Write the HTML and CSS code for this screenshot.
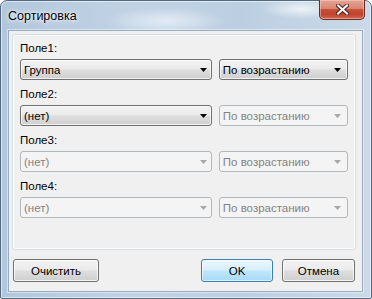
FILE: index.html
```html
<!DOCTYPE html>
<html lang="ru">
<head>
    <meta charset="UTF-8">
    <title>Сортировка</title>
    <link rel="stylesheet" href="styles.css">
</head>
<body>
    <div class="window">
        <!--заголовок окна-->
        <div class="titlebar">
            <span class="title">Сортировка</span>
            <button class="close-btn">
                <svg width="13" height="11" viewBox="0 0 13 11">
                    <path d="M2 1.5L11 9.5M11 1.5L2 9.5" stroke="#4a2320" stroke-width="4" stroke-linecap="square"/>
                    <path d="M2 1.5L11 9.5M11 1.5L2 9.5" stroke="#fff" stroke-width="2" stroke-linecap="square"/>
                </svg>
            </button>
        </div>
        <div class="client">
            <div class="groupbox">
                <div class="sort-row">
                    <div class="field-label">Поле1:</div>
                    <div class="combos">
                        <div class="combo combo-field"><span>Группа</span><svg class="arrow" width="7" height="4"><path d="M0 0H7L3.5 4Z"/></svg></div>
                        <div class="combo combo-order"><span>По возрастанию</span><svg class="arrow" width="7" height="4"><path d="M0 0H7L3.5 4Z"/></svg></div>
                    </div>
                </div>
                <div class="sort-row">
                    <div class="field-label">Поле2:</div>
                    <div class="combos">
                        <div class="combo combo-field"><span>(нет)</span><svg class="arrow" width="7" height="4"><path d="M0 0H7L3.5 4Z"/></svg></div>
                        <div class="combo combo-order disabled"><span>По возрастанию</span><svg class="arrow" width="7" height="4"><path d="M0 0H7L3.5 4Z"/></svg></div>
                    </div>
                </div>
                <div class="sort-row">
                    <div class="field-label">Поле3:</div>
                    <div class="combos">
                        <div class="combo combo-field disabled"><span>(нет)</span><svg class="arrow" width="7" height="4"><path d="M0 0H7L3.5 4Z"/></svg></div>
                        <div class="combo combo-order disabled"><span>По возрастанию</span><svg class="arrow" width="7" height="4"><path d="M0 0H7L3.5 4Z"/></svg></div>
                    </div>
                </div>
                <div class="sort-row">
                    <div class="field-label">Поле4:</div>
                    <div class="combos">
                        <div class="combo combo-field disabled"><span>(нет)</span><svg class="arrow" width="7" height="4"><path d="M0 0H7L3.5 4Z"/></svg></div>
                        <div class="combo combo-order disabled"><span>По возрастанию</span><svg class="arrow" width="7" height="4"><path d="M0 0H7L3.5 4Z"/></svg></div>
                    </div>
                </div>
            </div>
            <!--кнопки внизу-->
            <div class="buttons">
                <button class="btn btn-clear">Очистить</button>
                <button class="btn btn-default">OK</button>
                <button class="btn btn-cancel">Отмена</button>
            </div>
        </div>
    </div>
</body>
</html>
```

FILE: styles.css
```css
*{
    margin:0;padding:0;
    box-sizing:border-box;
}
body{
    background:#fff;
    font-family:"Liberation Sans",Arial,sans-serif;
    font-size:11.5px;
    color:#000;
}
.window{
    width:372px;
    height:299px;
    border:1px solid #55697f;
    border-radius:7px 7px 2px 2px;
    padding:0 8px 6px 7px;
    display:flex;
    flex-direction:column;
    background:
        radial-gradient(ellipse 60px 14px at 165px 20px,rgba(235,242,249,.8),rgba(235,242,249,0)),
        radial-gradient(ellipse 40px 10px at 300px 8px,rgba(255,255,255,.7),rgba(255,255,255,0)),
        linear-gradient(to right,#b2c7dd,#c1d2e4 35%,#bccfe2 65%,#cbd9e8);
    box-shadow:inset 0 0 0 1px rgba(255,255,255,.55);
}
.titlebar{
    height:29px;
    display:flex;
    justify-content:space-between;
    align-items:flex-start;
}
.title{
    font-size:12.5px;
    line-height:15px;
    margin-top:8px;
    text-shadow:0 0 6px #fff,0 0 3px #fff;
}
.close-btn{
    width:46px;
    height:20px;
    margin-top:-1px;
    margin-right:-2px;
    border:1px solid #6b2a22;
    border-top:none;
    border-radius:0 0 5px 5px;
    background:linear-gradient(#e6a494 0%,#d88573 45%,#c7513b 50%,#c0432e 75%,#d06a4e 100%);
    box-shadow:inset 0 0 0 1px rgba(255,220,210,.45);
    display:flex;
    align-items:center;
    justify-content:center;
}
.client{
    flex:1;
    background:#f0f0f0;
    border:1px solid #98abbf;
    box-shadow:0 0 0 1px rgba(255,255,255,.45);
    padding:3px 6px 0 3px;
}
.groupbox{
    height:216px;
    border:1px solid #d5dfe5;
    border-radius:3px;
    box-shadow:inset 0 0 0 1px #fff;
    padding:6px 7px 0 7px;
    display:flex;
    flex-direction:column;
    gap:7px;
}
.field-label{
    line-height:15px;
    height:15px;
    margin-bottom:3px;
}
.combos{
    display:flex;
    gap:7px;
}
.combo{
    height:21px;
    border:1px solid #707070;
    border-radius:3px;
    background:linear-gradient(#f2f2f2 0%,#ebebeb 45%,#dddddd 55%,#cfcfcf 100%);
    box-shadow:inset 0 0 0 1px rgba(255,255,255,.7);
    display:flex;
    align-items:center;
    justify-content:space-between;
    padding:0 4px 0 3px;
}
.combo-field{
    width:193px;
}
.combo-order{
    width:130px;
    padding-right:6px;
}
.combo .arrow{
    fill:#000;
}
.combo.disabled{
    border-color:#b3b8bc;
    background:#f4f4f4;
    box-shadow:none;
    color:#838383;
}
.combo.disabled .arrow{
    fill:#a8a8a8;
}
.buttons{
    display:flex;
    margin-top:9px;
    padding-left:1px;
}
.btn{
    height:23px;
    font-family:inherit;
    font-size:11.5px;
    color:#000;
    border:1px solid #707070;
    border-radius:3px;
    background:linear-gradient(#f2f2f2 0%,#ebebeb 45%,#dddddd 55%,#cfcfcf 100%);
    box-shadow:inset 0 0 0 1px rgba(255,255,255,.8);
}
.btn-clear{
    width:86px;
}
.btn-default{
    width:72px;
    margin-left:auto;
    border-color:#3c7fb1;
    background:linear-gradient(#eaf6fd 0%,#d9f0fc 45%,#bee6fd 55%,#a7d9f5 100%);
    box-shadow:inset 0 0 0 1px rgba(255,255,255,.6);
}
.btn-cancel{
    width:73px;
    margin-left:9px;
    margin-right:1px;
}
```
